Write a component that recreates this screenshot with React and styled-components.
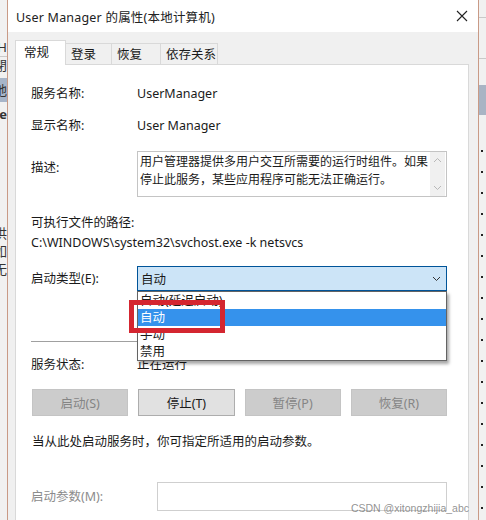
import React from 'react';
import styled, { createGlobalStyle } from 'styled-components';

const GlobalStyle = createGlobalStyle`
  * { box-sizing: border-box; margin: 0; padding: 0; }
  body {
    font-family: "Noto Sans", "Noto Sans CJK SC", sans-serif;
    font-size: 12px;
    color: #1a1a1a;
    background: #e9e9e9;
    overflow: hidden;
  }
`;

const Screen = styled.div`
  display: flex;
  width: 486px;
  height: 520px;
  overflow: hidden;
`;

// fenêtre en arrière-plan, visible sur les bords
const SideStrip = styled.div`
  width: ${p => p.w}px;
  flex-shrink: 0;
  background: #f1f1f1;
  overflow: hidden;
  display: flex;
  flex-direction: column;
  direction: rtl;
  position: relative;
`;

const StripItem = styled.div`
  margin-top: ${p => p.top || 0}px;
  height: ${p => p.h || 16}px;
  line-height: ${p => p.h || 16}px;
  white-space: nowrap;
  font-size: 13px;
  font-weight: ${p => (p.bold ? 700 : 400)};
  color: #333;
  background: ${p => p.bg || 'transparent'};
  border-top: ${p => (p.line ? '1px solid #c9c9c9' : 'none')};
`;

const Dots = styled.div`
  position: absolute;
  left: 2px;
  top: 150px;
  bottom: 0;
  width: 2px;
  background: repeating-linear-gradient(to bottom, #222 0 2px, transparent 2px 21px);
`;

const Dialog = styled.div`
  width: 472px;
  flex-shrink: 0;
  display: flex;
  flex-direction: column;
  border-left: 1px solid #c99a86;
  border-right: 1px solid #c99a86;
  background: #f0f0f0;
`;

const TitleBar = styled.div`
  height: 32px;
  background: #fff;
  display: flex;
  align-items: center;
  justify-content: space-between;
  padding: 0 10px 0 8px;
`;

const Title = styled.div`
  font-size: 12.5px;
  color: #222;
  letter-spacing: 0.2px;
`;

const CloseIcon = styled.svg`
  width: 12px;
  height: 12px;
`;

const Body = styled.div`
  flex: 1;
  padding: 8px 9px 0 7px;
  display: flex;
  flex-direction: column;
`;

const Tabs = styled.div`
  display: flex;
  align-items: flex-end;
  height: 25px;
  position: relative;
  z-index: 1;
`;

const Tab = styled.div`
  width: ${p => p.w}px;
  height: ${p => (p.active ? 25 : 22)}px;
  padding-left: ${p => (p.active ? 8 : 5)}px;
  line-height: ${p => (p.active ? 24 : 22)}px;
  background: ${p => (p.active ? '#fff' : '#f0f0f0')};
  border: 1px solid #d9d9d9;
  border-bottom: ${p => (p.active ? 'none' : '1px solid #d9d9d9')};
  border-left: ${p => (p.first ? '1px solid #d9d9d9' : 'none')};
  font-size: 12.5px;
`;

const Panel = styled.div`
  flex: 1;
  margin-top: -1px;
  background: #fff;
  border: 1px solid #d9d9d9;
  border-bottom: none;
  padding: 19px 21px 0 15px;
  position: relative;
`;

const Row = styled.div`
  display: flex;
  align-items: ${p => p.align || 'center'};
  margin-top: ${p => p.mt || 0}px;
  min-height: 20px;
`;

const Label = styled.div`
  width: ${p => p.w || 106}px;
  flex-shrink: 0;
  line-height: 20px;
  padding-top: ${p => p.pt || 0}px;
  color: ${p => (p.muted ? '#8c8c8c' : '#1a1a1a')};
  font-size: 12.5px;
`;

const Value = styled.div`
  line-height: 20px;
  font-size: 12.5px;
`;

const TextBox = styled.div`
  flex: 1;
  height: 46px;
  border: 1px solid #c4c4c4;
  display: flex;
  background: #fff;
`;

const TextContent = styled.div`
  flex: 1;
  padding: 1px 2px;
  line-height: 18px;
  font-size: 12px;
`;

const ScrollBar = styled.div`
  width: 15px;
  margin-right: 1px;
  background: #f0f0f0;
  display: flex;
  flex-direction: column;
  justify-content: space-between;
  align-items: center;
  padding: 5px 0;
`;

const Separator = styled.div`
  height: 1px;
  background: #a0a0a0;
  margin-top: ${p => p.mt}px;
`;

const ComboWrap = styled.div`
  flex: 1;
  position: relative;
`;

const Combo = styled.div`
  height: 25px;
  background: #cce4f7;
  border: 1px solid #005499;
  display: flex;
  align-items: center;
  justify-content: space-between;
  padding: 0 5px 0 3px;
  font-size: 12.5px;
`;

const DropList = styled.div`
  position: absolute;
  top: 100%;
  left: 0;
  right: 0;
  background: #fff;
  border: 1px solid #646464;
  box-shadow: 2px 3px 3px rgba(0, 0, 0, 0.35);
  z-index: 3;
`;

const DropItem = styled.div`
  height: 17px;
  line-height: 17px;
  padding-left: 2px;
  font-size: 12.5px;
  background: ${p => (p.selected ? '#3592ec' : 'transparent')};
  color: ${p => (p.selected ? '#fff' : '#1a1a1a')};
`;

// cadre rouge d'annotation
const Marker = styled.div`
  position: absolute;
  left: -8px;
  top: 34px;
  width: 96px;
  height: 33px;
  border: 5px solid #d42630;
  z-index: 4;
`;

const ButtonRow = styled.div`
  display: grid;
  grid-template-columns: repeat(4, 1fr);
  gap: 10px;
  margin-top: 14px;
  margin-left: 1px;
`;

const Button = styled.div`
  height: 27px;
  display: flex;
  align-items: center;
  justify-content: center;
  font-size: 12.5px;
  background: ${p => (p.disabled ? '#cccccc' : '#e1e1e1')};
  border: 1px solid ${p => (p.disabled ? '#c4c4c4' : '#adadad')};
  color: ${p => (p.disabled ? '#858585' : '#1a1a1a')};
`;

const Info = styled.div`
  margin-top: 16px;
  margin-left: 1px;
  line-height: 20px;
  font-size: 12.5px;
`;

const Input = styled.div`
  flex: 1;
  height: 29px;
  border: 1px solid #cfcfcf;
  background: #fff;
`;

const Watermark = styled.div`
  position: absolute;
  right: -1px;
  bottom: 6px;
  font-family: "Liberation Sans", sans-serif;
  font-size: 10.5px;
  color: rgba(110, 110, 110, 0.75);
  z-index: 2;
`;

const Chevron = ({ up, color }) => (
  <svg width="9" height="6" viewBox="0 0 9 6">
    <path d={up ? 'M1 5 L4.5 1.5 L8 5' : 'M1 1 L4.5 4.5 L8 1'} fill="none" stroke={color} strokeWidth="1" />
  </svg>
);

const App = () => {
  return (
    <>
      <GlobalStyle />
      <Screen>
        <SideStrip w={7}>
          <StripItem top={38} h={18}>H</StripItem>
          <StripItem h={16} line>閉</StripItem>
          <StripItem top={6} h={24} bg="#a7b5c9">地</StripItem>
          <StripItem top={2} h={20} bold>e</StripItem>
          <StripItem top={100} h={18}>供</StripItem>
          <StripItem h={18}>如</StripItem>
          <StripItem h={18}>无</StripItem>
        </SideStrip>
        <Dialog>
          <TitleBar>
            <Title>User Manager 的属性(本地计算机)</Title>
            <CloseIcon viewBox="0 0 12 12">
              <path d="M1 1 L11 11 M11 1 L1 11" stroke="#222" strokeWidth="1.1" />
            </CloseIcon>
          </TitleBar>
          <Body>
            <Tabs>
              <Tab active first w={51}>常规</Tab>
              <Tab w={46}>登录</Tab>
              <Tab w={49}>恢复</Tab>
              <Tab w={57}>依存关系</Tab>
            </Tabs>
            <Panel>
              <Row>
                <Label>服务名称:</Label>
                <Value>UserManager</Value>
              </Row>
              <Row mt={12}>
                <Label>显示名称:</Label>
                <Value>User Manager</Value>
              </Row>
              <Row mt={15} align="flex-start">
                <Label pt={7}>描述:</Label>
                <TextBox>
                  <TextContent>
                    用户管理器提供多用户交互所需要的运行时组件。如果<br />
                    停止此服务，某些应用程序可能无法正确运行。
                  </TextContent>
                  <ScrollBar>
                    <Chevron up color="#b8b8b8" />
                    <Chevron color="#b8b8b8" />
                  </ScrollBar>
                </TextBox>
              </Row>
              <Row mt={16}>
                <Label w={300}>可执行文件的路径:</Label>
              </Row>
              <Row>
                <Value>C:\WINDOWS\system32\svchost.exe -k netsvcs</Value>
              </Row>
              <Row mt={13}>
                <Label>启动类型(E):</Label>
                <ComboWrap>
                  <Combo>
                    <span>自动</span>
                    <Chevron color="#333" />
                  </Combo>
                  <DropList>
                    <DropItem>自动(延迟启动)</DropItem>
                    <DropItem selected>自动</DropItem>
                    <DropItem>手动</DropItem>
                    <DropItem>禁用</DropItem>
                  </DropList>
                  <Marker />
                </ComboWrap>
              </Row>
              <Separator mt={50} />
              <Row mt={13}>
                <Label>服务状态:</Label>
                <Value>正在运行</Value>
              </Row>
              <ButtonRow>
                <Button disabled>启动(S)</Button>
                <Button>停止(T)</Button>
                <Button disabled>暂停(P)</Button>
                <Button disabled>恢复(R)</Button>
              </ButtonRow>
              <Info>当从此处启动服务时，你可指定所适用的启动参数。</Info>
              <Row mt={30}>
                <Label w={126} muted>启动参数(M):</Label>
                <Input />
              </Row>
              <Watermark>CSDN @xitongzhijia_abc</Watermark>
            </Panel>
          </Body>
        </Dialog>
        <SideStrip w={7}>
          <StripItem top={17} h={1} line />
          <StripItem top={40} h={1} line />
          <StripItem top={26} h={30} bg="#a9b4c4" />
          <Dots />
        </SideStrip>
      </Screen>
    </>
  );
};

export default App;
